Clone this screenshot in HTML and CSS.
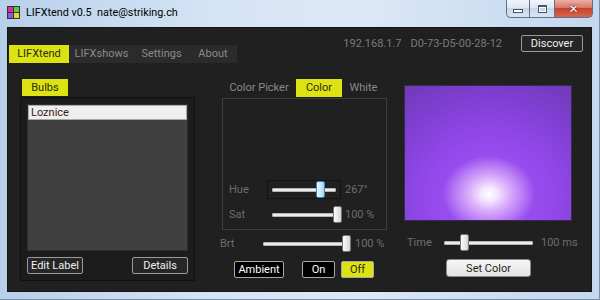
FILE: index.html
```html
<!DOCTYPE html>
<html lang="en">
<head>
<meta charset="UTF-8">
<title>LIFXtend v0.5</title>
<link rel="stylesheet" href="styles.css">
</head>
<body>

<div class="window">
  <div class="titlebar">
    <div class="app-icon">
      <span class="sq pink"></span><span class="sq green"></span>
      <span class="sq purple"></span><span class="sq yellow"></span>
    </div>
    <span class="title-text">LIFXtend v0.5  nate@striking.ch</span>
    <div class="caption">
      <div class="cap min"><span class="min-glyph"></span></div>
      <div class="cap max"><span class="max-glyph"></span></div>
      <div class="cap close">✕</div>
    </div>
  </div>

  <div class="client">
    <div class="topbar">
      <nav class="tabs">
        <span class="tab active w60">LIFXtend</span>
        <span class="tab w65">LIFXshows</span>
        <span class="tab w55">Settings</span>
        <span class="tab w48">About</span>
      </nav>
      <div class="device">
        <span class="ip">192.168.1.7</span>
        <span class="mac">D0-73-D5-00-28-12</span>
        <button class="btn dark discover">Discover</button>
      </div>
    </div>

    <div class="main">
      <!-- bulbs -->
      <section class="bulbs">
        <span class="subtab">Bulbs</span>
        <div class="bulbs-box">
          <ul class="bulb-list">
            <li class="selected">Loznice</li>
          </ul>
          <div class="bulb-actions">
            <button class="btn dark">Edit Label</button>
            <button class="btn dark">Details</button>
          </div>
        </div>
      </section>

      <!-- color controls -->
      <section class="color">
        <div class="ctabs">
          <span class="ctab picker">Color Picker</span>
          <span class="ctab active">Color</span>
          <span class="ctab white">White</span>
        </div>
        <div class="color-box">
          <div class="row">
            <span class="label">Hue</span>
            <div class="slider focused">
              <div class="track"></div>
              <div class="thumb hot" style="left: 48px"></div>
            </div>
            <span class="value">267°</span>
          </div>
          <div class="row">
            <span class="label">Sat</span>
            <div class="slider">
              <div class="track"></div>
              <div class="thumb" style="left: 65px"></div>
            </div>
            <span class="value">100 %</span>
          </div>
        </div>
        <div class="row brt">
          <span class="label">Brt</span>
          <div class="slider wide">
            <div class="track"></div>
            <div class="thumb" style="left: 83px"></div>
          </div>
          <span class="value">100 %</span>
        </div>
        <div class="power">
          <button class="btn black ambient">Ambient</button>
          <button class="btn black on">On</button>
          <button class="btn black off">Off</button>
        </div>
      </section>

      <!-- preview -->
      <section class="preview">
        <div class="swatch"></div>
        <div class="row time">
          <span class="label">Time</span>
          <div class="slider time-slider">
            <div class="track"></div>
            <div class="thumb" style="left: 20px"></div>
          </div>
          <span class="value">100 ms</span>
        </div>
        <button class="btn light setcolor">Set Color</button>
      </section>
    </div>
  </div>
</div>

</body>
</html>
```

FILE: styles.css
```css
body {
  margin: 0;
  width: 600px;
  height: 300px;
  overflow: hidden;
  font-family: Roboto, "Open Sans", sans-serif;
  font-size: 11px;
}

.window {
  height: 300px;
  box-sizing: border-box;
  display: flex;
  flex-direction: column;
  background: linear-gradient(90deg, #b8cfea 0%, #d5e4f5 35%, #dbe8f7 60%, #c3d7ee 100%);
  border-right: 1px solid #7d8da3;
  border-bottom: 1px solid #7d8da3;
}

/* title bar */
.titlebar {
  height: 27px;
  display: flex;
  align-items: center;
  padding-left: 7px;
}

.app-icon {
  display: grid;
  grid-template-columns: 5px 5px;
  gap: 1px;
  padding: 1px;
  background: #333;
  margin-top: -2px;
}

.sq { width: 5px; height: 5px; }
.pink { background: #d9308c; }
.green { background: #52d24c; }
.purple { background: #9a4ee2; }
.yellow { background: #e4dc1c; }

.title-text {
  margin-left: 6px;
  margin-top: -3px;
  font-size: 10.8px;
  color: #000;
  white-space: pre;
}

.caption {
  margin-left: auto;
  margin-right: 6px;
  align-self: flex-start;
  display: flex;
}

.cap {
  height: 18px;
  box-sizing: border-box;
  border: 1px solid #5f6f86;
  border-top: none;
  display: flex;
  align-items: center;
  justify-content: center;
  background: linear-gradient(#f2f6fb, #dde7f3 45%, #c7d6ea 50%, #d9e5f3);
}

.min { width: 23px; border-radius: 0 0 0 5px; border-right: none; }
.max { width: 25px; border-right: none; }
.close {
  width: 39px;
  border-radius: 0 0 5px 0;
  background: linear-gradient(#eab0a4, #d9786a 45%, #c8432e 50%, #d7664f);
  color: #fff;
  font-family: "DejaVu Sans", sans-serif;
  font-size: 12px;
  font-weight: bold;
  text-shadow: 0 0 2px #5a1a10, 0 0 1px #5a1a10;
}

.min-glyph {
  width: 8px;
  height: 2px;
  margin-top: 5px;
  background: #fff;
  border: 1px solid #46556b;
}

.max-glyph {
  width: 7px;
  height: 5px;
  border: 1px solid #46556b;
  border-top-width: 2px;
  box-shadow: inset 0 0 0 1px #fff;
}

/* client area */
.client {
  flex: 1;
  margin: 0 7px 7px 7px;
  background: #202020;
  border: 1px solid #151515;
  display: flex;
  flex-direction: column;
}

.topbar {
  height: 35px;
  display: flex;
  align-items: flex-start;
}

.tabs {
  margin-top: 17px;
  margin-left: 1px;
  height: 18px;
  width: 228px;
  display: flex;
  background: #2b2b2b;
}

.tab {
  line-height: 18px;
  text-align: center;
  white-space: nowrap;
  color: #8a8a8a;
}

.w60 { width: 60px; }
.w65 { width: 65px; }
.w55 { width: 55px; }
.w48 { width: 48px; }

.tab.active {
  background: #dde312;
  color: #2b2b10;
}

.device {
  margin-left: auto;
  margin-top: 7px;
  height: 17px;
  display: flex;
  align-items: center;
  color: #7b7b7b;
}

.ip { margin-right: 9px; }
.mac { margin-right: 19px; }

.btn {
  font-family: inherit;
  font-size: 11px;
  padding: 0;
  box-sizing: border-box;
  height: 17px;
  cursor: pointer;
}

.btn.dark {
  background: #262626;
  color: #f0f0f0;
  border: 1px solid #9a9a9a;
  border-radius: 2px;
}

.btn.black {
  background: #000;
  color: #fff;
  border: 1px solid #a8a8a8;
  border-radius: 2px;
}

.btn.light {
  background: linear-gradient(#f6f6f6, #e3e3e3);
  color: #1e1e1e;
  border: 1px solid #8a8a8a;
  border-radius: 3px;
}

.discover {
  width: 62px;
  margin-right: 8px;
}

.main {
  flex: 1;
  display: flex;
  padding-left: 12px;
}

/* bulbs panel */
.bulbs {
  width: 175px;
  margin-top: 16px;
}

.subtab {
  display: block;
  width: 46px;
  height: 17px;
  margin-left: 2px;
  line-height: 17px;
  text-align: center;
  background: #dde312;
  color: #2b2b10;
}

.bulbs-box {
  height: 184px;
  margin-top: 1px;
  box-sizing: border-box;
  border: 1px solid #111;
  background: #1c1c1c;
  padding: 6px;
}

.bulb-list {
  list-style: none;
  margin: 0;
  padding: 0;
  height: 147px;
  background: #404040;
  border: 1px solid #2e2e2e;
  box-sizing: border-box;
}

.bulb-list li {
  height: 15px;
  line-height: 13px;
  padding-left: 2px;
  box-sizing: border-box;
}

.bulb-list li.selected {
  background: #efefef;
  border: 1px solid #a8a8a8;
  color: #3a1818;
}

.bulb-actions {
  margin-top: 6px;
  display: flex;
  justify-content: space-between;
}

.bulb-actions .btn { width: 56px; }

/* color panel */
.color {
  width: 165px;
  margin-left: 27px;
  margin-top: 16px;
}

.ctabs {
  height: 18px;
  display: flex;
}

.ctab {
  line-height: 18px;
  text-align: center;
  color: #8a8a8a;
}

.ctab.picker { width: 74px; }
.ctab.active { width: 46px; background: #dde312; color: #2b2b10; }
.ctab.white { width: 43px; }

.color-box {
  height: 132px;
  margin-top: 1px;
  box-sizing: border-box;
  border: 1px solid #3e3e3e;
  display: flex;
  flex-direction: column;
  justify-content: flex-end;
  gap: 8px;
  padding: 0 0 6px 6px;
}

.row {
  height: 17px;
  display: flex;
  align-items: center;
  color: #6e6e6e;
  white-space: nowrap;
}

.label { width: 39px; flex-shrink: 0; }

.slider {
  position: relative;
  flex-shrink: 0;
  width: 72px;
  height: 17px;
  box-sizing: border-box;
}

.slider.focused { outline: 1px dotted #050505; }

.track {
  position: absolute;
  left: 4px;
  right: 4px;
  top: 7px;
  height: 4px;
  box-sizing: border-box;
  background: #ececec;
  border: 1px solid #b4b4b4;
  border-radius: 1px;
}

.thumb {
  position: absolute;
  top: 0;
  width: 9px;
  height: 17px;
  box-sizing: border-box;
  background: linear-gradient(90deg, #fbfbfb, #e6e6e6 60%, #d4d4d4);
  border: 1px solid #747474;
  border-radius: 2px;
}

.thumb.hot {
  background: linear-gradient(90deg, #eaf5fd, #c5e3f8 60%, #a8d2f1);
  border-color: #3c7fb1;
}

.value { margin-left: 5px; }

.brt { margin-top: 5px; margin-left: -2px; }
.slider.wide { width: 95px; }
.brt .value { margin-left: 1px; }

.power {
  margin-top: 9px;
  margin-left: 12px;
  display: flex;
}

.ambient { width: 50px; }
.on { width: 33px; margin-left: 18px; }
.off {
  width: 33px;
  margin-left: 6px;
}

.btn.black.off {
  background: #dde312;
  color: #2b2b10;
}

/* preview panel */
.preview {
  width: 168px;
  margin-left: 17px;
}

.swatch {
  margin-top: 22px;
  height: 136px;
  box-sizing: border-box;
  border: 1px solid #3a2a50;
  background:
    radial-gradient(ellipse 46px 38px at 84px 108px, #ffffff 0%, #f4e6ff 18%, #d9acfb 45%, rgba(160, 86, 246, 0) 100%),
    radial-gradient(ellipse 150px 140px at 84px 112px, #a457f6 0%, #9549ec 40%, #8040d4 70%, #6f38b4 100%);
}

.time { margin-top: 13px; padding-left: 3px; }
.time .label { width: 33px; }
.slider.time-slider { width: 97px; }
.time .value { margin-left: 4px; }

.setcolor {
  margin-top: 8px;
  margin-left: 42px;
  width: 85px;
  height: 18px;
}
```
